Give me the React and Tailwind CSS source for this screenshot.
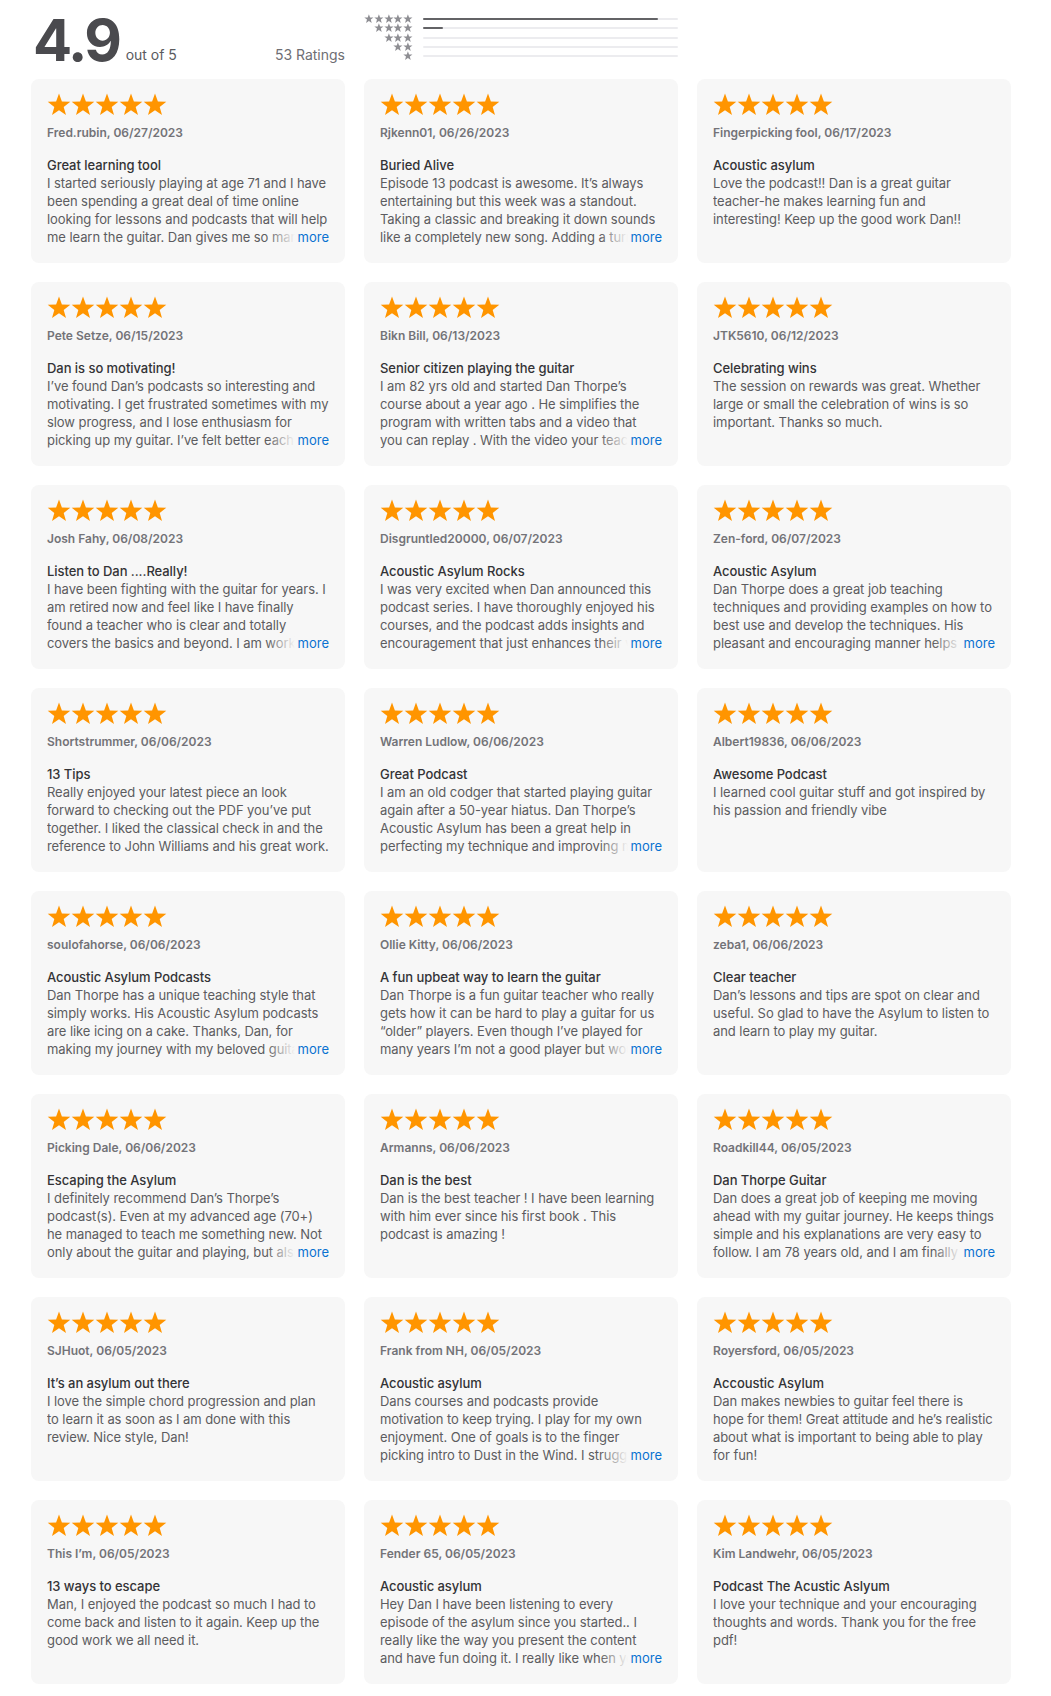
import React from 'react';

const reviews = [
  { name: 'Fred.rubin', date: '06/27/2023', title: 'Great learning tool', body: 'I started seriously playing at age 71 and I have been spending a great deal of time online looking for lessons and podcasts that will help me learn the guitar. Dan gives me so many great tips and ideas every single week that I can use.', more: true },
  { name: 'Rjkenn01', date: '06/26/2023', title: 'Buried Alive', body: 'Episode 13 podcast is awesome. It\u2019s always entertaining but this week was a standout. Taking a classic and breaking it down sounds like a completely new song. Adding a turn here and a few fills there makes it sing.', more: true },
  { name: 'Fingerpicking fool', date: '06/17/2023', title: 'Acoustic asylum', body: 'Love the podcast!! Dan is a great guitar teacher-he makes learning fun and interesting! Keep up the good work Dan!!' },
  { name: 'Pete Setze', date: '06/15/2023', title: 'Dan is so motivating!', body: 'I\u2019ve found Dan\u2019s podcasts so interesting and motivating. I get frustrated sometimes with my slow progress, and I lose enthusiasm for picking up my guitar. I\u2019ve felt better each time I listen to one of the episodes.', more: true },
  { name: 'Bikn Bill', date: '06/13/2023', title: 'Senior citizen playing the guitar', body: 'I am 82 yrs old and started Dan Thorpe\u2019s course about a year ago . He simplifies the program with written tabs and a video that you can replay . With the video your teacher is always right there with you.', more: true },
  { name: 'JTK5610', date: '06/12/2023', title: 'Celebrating wins', body: 'The session on rewards was great. Whether large or small the celebration of wins is so important. Thanks so much.' },
  { name: 'Josh Fahy', date: '06/08/2023', title: 'Listen to Dan ....Really!', body: 'I have been fighting with the guitar for years. I am retired now and feel like I have finally found a teacher who is clear and totally covers the basics and beyond. I am working through the course every day now.', more: true },
  { name: 'Disgruntled20000', date: '06/07/2023', title: 'Acoustic Asylum Rocks', body: 'I was very excited when Dan announced this podcast series. I have thoroughly enjoyed his courses, and the podcast adds insights and encouragement that just enhances their value for all of us players.', more: true },
  { name: 'Zen-ford', date: '06/07/2023', title: 'Acoustic Asylum', body: 'Dan Thorpe does a great job teaching techniques and providing examples on how to best use and develop the techniques. His pleasant and encouraging manner helps me keep going every day.', more: true },
  { name: 'Shortstrummer', date: '06/06/2023', title: '13 Tips', body: 'Really enjoyed your latest piece an look forward to checking out the PDF you\u2019ve put together. I liked the classical check in and the reference to John Williams and his great work.' },
  { name: 'Warren Ludlow', date: '06/06/2023', title: 'Great Podcast', body: 'I am an old codger that started playing guitar again after a 50-year hiatus. Dan Thorpe\u2019s Acoustic Asylum has been a great help in perfecting my technique and improving my overall playing a lot.', more: true },
  { name: 'Albert19836', date: '06/06/2023', title: 'Awesome Podcast', body: 'I learned cool guitar stuff and got inspired by his passion and friendly vibe' },
  { name: 'soulofahorse', date: '06/06/2023', title: 'Acoustic Asylum Podcasts', body: 'Dan Thorpe has a unique teaching style that simply works. His Acoustic Asylum podcasts are like icing on a cake. Thanks, Dan, for making my journey with my beloved guitar so much more fun.', more: true },
  { name: 'Ollie Kitty', date: '06/06/2023', title: 'A fun upbeat way to learn the guitar', body: 'Dan Thorpe is a fun guitar teacher who really gets how it can be hard to play a guitar for us \u201colder\u201d players. Even though I\u2019ve played for many years I\u2019m not a good player but would like to be.', more: true },
  { name: 'zeba1', date: '06/06/2023', title: 'Clear teacher', body: 'Dan\u2019s lessons and tips are spot on clear and useful. So glad to have the Asylum to listen to and learn to play my guitar.' },
  { name: 'Picking Dale', date: '06/06/2023', title: 'Escaping the Asylum', body: 'I definitely recommend Dan\u2019s Thorpe\u2019s podcast(s). Even at my advanced age (70+) he managed to teach me something new. Not only about the guitar and playing, but also about practice and patience.', more: true },
  { name: 'Armanns', date: '06/06/2023', title: 'Dan is the best', body: 'Dan is the best teacher ! I have been learning with him ever since his first book . This podcast is amazing !' },
  { name: 'Roadkill44', date: '06/05/2023', title: 'Dan Thorpe Guitar', body: 'Dan does a great job of keeping me moving ahead with my guitar journey. He keeps things simple and his explanations are very easy to follow. I am 78 years old, and I am finally making real progress.', more: true },
  { name: 'SJHuot', date: '06/05/2023', title: 'It\u2019s an asylum out there', body: 'I love the simple chord progression and plan to learn it as soon as I am done with this review. Nice style, Dan!' },
  { name: 'Frank from NH', date: '06/05/2023', title: 'Acoustic asylum', body: 'Dans courses and podcasts provide motivation to keep trying. I play for my own enjoyment. One of goals is to the finger picking intro to Dust in the Wind. I struggle with it but I keep at it.', more: true },
  { name: 'Royersford', date: '06/05/2023', title: 'Accoustic Asylum', body: 'Dan makes newbies to guitar feel there is hope for them! Great attitude and he\u2019s realistic about what is important to being able to play for fun!' },
  { name: 'This I\u2019m', date: '06/05/2023', title: '13 ways to escape', body: 'Man, I enjoyed the podcast so much I had to come back and listen to it again. Keep up the good work we all need it.' },
  { name: 'Fender 65', date: '06/05/2023', title: 'Acoustic asylum', body: 'Hey Dan I have been listening to every episode of the asylum since you started.. I really like the way you present the content and have fun doing it. I really like when you play the whole song.', more: true },
  { name: 'Kim Landwehr', date: '06/05/2023', title: 'Podcast The Acustic Aslyum', body: 'I love your technique and your encouraging thoughts and words. Thank you for the free pdf!' },
];

const histogram = [
  { stars: 5, pct: 92 },
  { stars: 4, pct: 8 },
  { stars: 3, pct: 0 },
  { stars: 2, pct: 0 },
  { stars: 1, pct: 0 },
];

const STAR = '12,0.6 14.9,8.4 23.3,8.7 16.7,13.9 19,22 12,17.3 5,22 7.3,13.9 0.7,8.7 9.1,8.4';

const Star = ({ className }) => (
  <svg viewBox="0 0 24 23" className={className}>
    <polygon points={STAR} fill="currentColor" />
  </svg>
);

const ReviewCard = ({ review }) => (
  <div className="h-[184px] rounded-lg bg-[#f7f7f7] px-4 pt-[14px]">
    <div className="flex text-[#ff9500]">
      {[0, 1, 2, 3, 4].map((i) => (
        <Star key={i} className="w-[24px] h-[23px]" />
      ))}
    </div>
    <div className="mt-[9px] text-[12px] leading-4 font-semibold text-[#737378]">
      {review.name}, {review.date}
    </div>
    <div className="mt-[15px] text-[13px] leading-[18px] font-medium tracking-[-0.05px] text-[#333336]">{review.title}</div>
    <div className="relative h-[72px] overflow-hidden text-[13px] leading-[18px] tracking-[-0.07px] text-[#5c5c60]">
      {review.body}
      {review.more && (
        <div className="absolute right-0 bottom-0 flex h-[18px]">
          <div className="w-[28px] bg-gradient-to-r from-[#f7f7f700] to-[#f7f7f7]" />
          <span className="bg-[#f7f7f7] pl-[3px] tracking-normal text-[#0a72d1]">more</span>
        </div>
      )}
    </div>
  </div>
);

export default function App() {
  return (
    <div className="w-[1051px] bg-white pl-[31px] pb-3 font-['Inter','Noto_Sans',sans-serif] antialiased">
      {/* header */}
      <div className="grid grid-cols-[314px_314px] gap-x-[19px] h-[79px]">
        <div className="flex items-end pb-[16px] pl-[2px]">
          <span className="text-[58px] leading-[46px] font-bold tracking-[-0.04em] text-[#4a4a4e]">4.9</span>
          <span className="ml-[6px] text-[14px] leading-4 text-[#5a5a5e]">out of 5</span>
          <span className="ml-auto text-[14px] leading-4 text-[#6e6e73]">53 Ratings</span>
        </div>
        <div className="flex items-start pt-[14px]">
          <div className="flex flex-col w-[49px]">
            {histogram.map((row) => (
              <div key={row.stars} className="flex justify-end h-[9.3px]">
                {Array.from({ length: row.stars }).map((_, i) => (
                  <Star key={i} className="w-[9.8px] h-[9.3px] text-[#8e8e93]" />
                ))}
              </div>
            ))}
          </div>
          <div className="flex flex-col flex-1 ml-[10px] pt-[4px]">
            {histogram.map((row) => (
              <div key={row.stars} className="h-[9.3px]">
                <div className="h-[2px] bg-[#ececef] rounded-full">
                  <div className="h-[2px] bg-[#636366] rounded-full" style={{ width: `${row.pct}%` }} />
                </div>
              </div>
            ))}
          </div>
        </div>
      </div>

      {/* reviews */}
      <div className="grid grid-cols-[314px_314px_314px] gap-x-[19px] gap-y-[19px]">
        {reviews.map((r, i) => (
          <ReviewCard key={i} review={r} />
        ))}
      </div>
    </div>
  );
}
